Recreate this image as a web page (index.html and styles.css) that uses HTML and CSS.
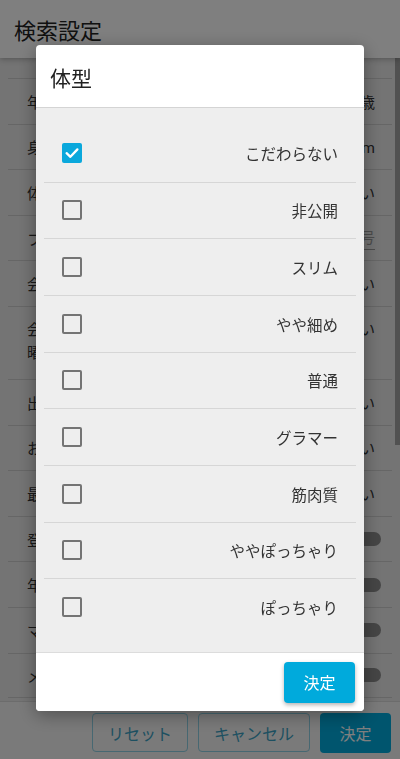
FILE: index.html
```
<!DOCTYPE html>
<html lang="ja">
<head>
<meta charset="utf-8">
<title>検索設定</title>
<link rel="stylesheet" href="styles.css">
</head>
<body>
<div class="app">
  <header class="topbar"><h1>検索設定</h1></header>
  <main class="settings">
    <div class="row"><span class="label">年齢</span><span class="value">18歳〜60歳</span></div>
    <div class="row"><span class="label">身長</span><span class="value">150cm〜180cm</span></div>
    <div class="row"><span class="label">体型</span><span class="value">こだわらない</span></div>
    <div class="row"><span class="label">フリーワード</span><span class="input">会員番号</span></div>
    <div class="row"><span class="label">会員タイプ</span><span class="value">こだわらない</span></div>
    <div class="row row--tall"><span class="label">会いたい<br>曜日</span><span class="value">こだわらない</span></div>
    <div class="row"><span class="label">出身地</span><span class="value">こだわらない</span></div>
    <div class="row"><span class="label">お酒</span><span class="value">こだわらない</span></div>
    <div class="row"><span class="label">最終ログイン</span><span class="value">こだわらない</span></div>
    <div class="row"><span class="label">登録したばかり</span><span class="switch"></span></div>
    <div class="row"><span class="label">年齢確認済み</span><span class="switch"></span></div>
    <div class="row"><span class="label">マッチング済みを除く</span><span class="switch"></span></div>
    <div class="row"><span class="label">メッセージ済みを除く</span><span class="switch"></span></div>
  </main>
  <footer class="actions">
    <button class="btn btn--outline btn--reset">リセット</button>
    <button class="btn btn--outline btn--cancel">キャンセル</button>
    <button class="btn btn--fill">決定</button>
  </footer>
  <div class="scroll-thumb"></div>
</div>

<div class="overlay">
  <div class="dialog">
    <div class="dialog-head">体型</div>
    <ul class="options">
      <li class="option"><span class="check check--on"><svg viewBox="0 0 20 20" width="20" height="20"><path d="M4.6 10.2 L8.4 13.8 L15.4 6.4" fill="none" stroke="#fff" stroke-width="2.3" stroke-linecap="round" stroke-linejoin="round"/></svg></span><span class="option-text">こだわらない</span></li>
      <li class="option"><span class="check"></span><span class="option-text">非公開</span></li>
      <li class="option"><span class="check"></span><span class="option-text">スリム</span></li>
      <li class="option"><span class="check"></span><span class="option-text">やや細め</span></li>
      <li class="option"><span class="check"></span><span class="option-text">普通</span></li>
      <li class="option"><span class="check"></span><span class="option-text">グラマー</span></li>
      <li class="option"><span class="check"></span><span class="option-text">筋肉質</span></li>
      <li class="option"><span class="check"></span><span class="option-text">ややぽっちゃり</span></li>
      <li class="option"><span class="check"></span><span class="option-text">ぽっちゃり</span></li>
    </ul>
    <div class="dialog-foot"><button class="dialog-btn">決定</button></div>
  </div>
</div>
</body>
</html>
```
FILE: styles.css
```
* { box-sizing: border-box; margin: 0; padding: 0; }
html, body { height: 100%; }
body {
  font-family: Roboto, "Noto Sans CJK JP", sans-serif;
  color: #333;
  background: #e8e8e8;
  overflow: hidden;
}
.app {
  height: 759px;
  display: flex;
  flex-direction: column;
  position: relative;
}
.topbar {
  height: 58px;
  flex: none;
  background: #fff;
  display: flex;
  align-items: center;
  padding-left: 14px;
  box-shadow: 0 1px 6px rgba(0,0,0,.3);
  position: relative;
  z-index: 1;
}
.topbar h1 { font-size: 22px; font-weight: 400; color: #222; }

.settings {
  flex: 1;
  overflow: hidden;
  padding: 20px 8px 0;
  background: #e8e8e8;
}
.row {
  display: flex;
  justify-content: space-between;
  align-items: center;
  height: 45.6px;
  padding: 0 17px 0 19px;
  border-top: 1px solid #cdcdcd;
  font-size: 15px;
  color: #333;
}
.row:last-child { border-bottom: 1px solid #cdcdcd; }
.row--tall {
  height: 73px;
  align-items: flex-start;
  padding-top: 12px;
  line-height: 23px;
}
.input {
  color: #999;
  border-bottom: 1px solid #999;
  padding-bottom: 2px;
  width: 120px;
  text-align: right;
}
.switch {
  width: 34px;
  height: 14px;
  border-radius: 7px;
  background: #8c8c8c;
  margin-right: -6px;
}
.actions {
  height: 58px;
  flex: none;
  background: #f4f4f4;
  border-top: 1px solid #d8d8d8;
  display: flex;
  justify-content: flex-end;
  align-items: flex-start;
  gap: 10px;
  padding: 11px 9px 0;
}
.btn {
  height: 39px;
  font-family: inherit;
  font-size: 16px;
  border-radius: 4px;
}
.btn--outline {
  background: transparent;
  border: 1px solid #8fd0e4;
  color: #3aa0c2;
}
.btn--reset { width: 96px; }
.btn--cancel { width: 112px; }
.btn--fill {
  width: 71px;
  height: 40px;
  background: #00aadc;
  border: none;
  color: #fff;
}
.scroll-thumb {
  position: absolute;
  right: 0;
  top: 58px;
  width: 5px;
  height: 387px;
  background: rgba(0,0,0,.3);
}

.overlay {
  position: fixed;
  inset: 0;
  z-index: 10;
  background: rgba(0,0,0,.5);
  display: flex;
  justify-content: center;
  align-items: flex-start;
  padding-top: 45px;
}
.dialog {
  width: 328px;
  background: #fff;
  border-radius: 4px;
  overflow: hidden;
  box-shadow: 0 4px 18px rgba(0,0,0,.35);
}
.dialog-head {
  height: 63px;
  border-bottom: 1px solid #d4d4d4;
  display: flex;
  align-items: center;
  padding: 1px 0 0 14px;
  font-size: 21px;
  color: #222;
}
.options {
  list-style: none;
  background: #eeeeee;
  padding: 17px 8px;
}
.option {
  height: 56.67px;
  display: flex;
  align-items: center;
  justify-content: space-between;
  padding: 0 18px;
  font-size: 15.5px;
  color: #333;
}
.option + .option { border-top: 1px solid #d6d6d6; }
.check {
  width: 20px;
  height: 20px;
  border: 2px solid #747474;
  border-radius: 2px;
  display: flex;
  align-items: center;
  justify-content: center;
}
.check--on {
  background: #0aa8dc;
  border: none;
}
.dialog-foot {
  height: 59px;
  border-top: 1px solid #dcdcdc;
  display: flex;
  justify-content: flex-end;
  align-items: flex-start;
  padding: 9px 9px 0;
  background: #fff;
}
.dialog-btn {
  width: 71px;
  height: 41px;
  background: #00aadc;
  color: #fff;
  border: none;
  border-radius: 4px;
  font-family: inherit;
  font-size: 16px;
  box-shadow: 0 2px 4px rgba(0,0,0,.3);
}
```
